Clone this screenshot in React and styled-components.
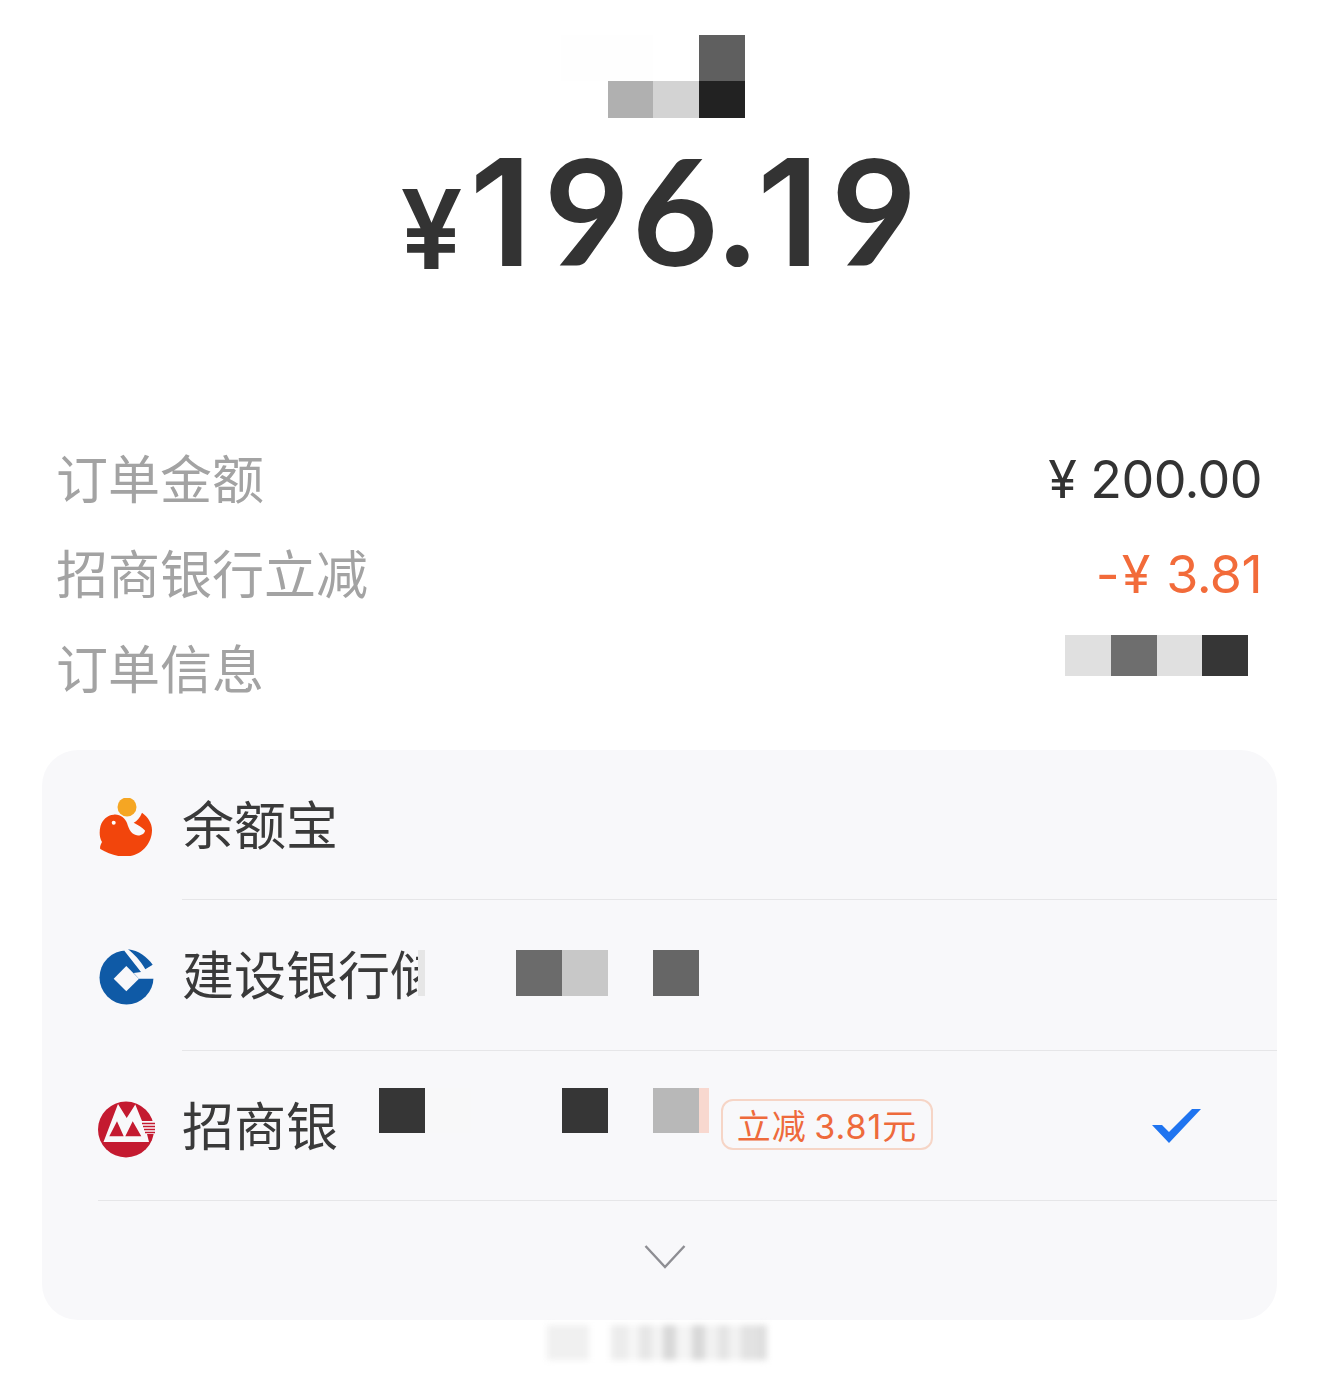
import React from 'react';
import styled, { createGlobalStyle } from 'styled-components';

const GlobalStyle = createGlobalStyle`
  html, body {
    margin: 0;
    padding: 0;
    background: #fff;
  }
  body {
    font-family: Inter, "Noto Sans CJK SC", sans-serif;
  }
`;

const Page = styled.div`
  width: 1320px;
  height: 1375px;
  overflow: hidden;
  display: flex;
  flex-direction: column;
`;

const Mosaic = styled.div`
  display: flex;
  flex-shrink: 0;
  margin-left: ${(p) => p.$left || 0}px;
  margin-right: ${(p) => p.$right || 0}px;
  margin-top: ${(p) => p.$top || 0}px;
  align-self: flex-start;
`;

const Cell = styled.div`
  width: ${(p) => p.$w || 46}px;
  height: ${(p) => p.$h || 46}px;
  background: ${(p) => p.$tone || 'transparent'};
`;

const Merchant = styled.div`
  display: flex;
  flex-direction: column;
  margin: 35px 0 0 561px;
`;

const MosaicRow = styled.div`
  display: flex;
`;

const Amount = styled.div`
  display: flex;
  align-items: baseline;
  justify-content: center;
  height: 186px;
  color: #333;
  font-family: Lato, Inter, sans-serif;
  font-weight: 700;
  line-height: 182px;
`;

const Currency = styled.span`
  font-family: Inter, sans-serif;
  font-weight: 600;
  font-size: 110px;
  margin-right: 7px;
  transform: translateY(3px);
`;

const Digits = styled.span`
  font-size: 148px;
  letter-spacing: 2px;
`;

const One = styled.span`
  font-family: Inter, sans-serif;
  font-weight: 600;
  letter-spacing: 12px;
`;

const Summary = styled.div`
  margin-top: 126px;
  padding: 0 58px 0 56px;
`;

const SummaryRow = styled.div`
  height: 95px;
  display: flex;
  align-items: center;
  justify-content: space-between;
`;

const Label = styled.span`
  font-family: "Noto Sans CJK SC", sans-serif;
  font-size: 52px;
  font-weight: 400;
  color: #a3a3a3;
  margin-bottom: 2px;
`;

const Value = styled.span`
  font-size: 52px;
  font-weight: 400;
  letter-spacing: -0.6px;
  margin-top: 4px;
  color: ${(p) => p.$tone || '#333'};
`;

const Sign = styled.span`
  letter-spacing: 2px;
`;

const Panel = styled.div`
  margin: 35px 43px 0 42px;
  height: 570px;
  background: #f8f8fa;
  border-radius: 36px;
  overflow: hidden;
`;

const PayRow = styled.div`
  height: ${(p) => p.$h}px;
  display: flex;
  align-items: center;
  padding: 0 76px 0 56px;
`;

const LogoSlot = styled.div`
  width: 58px;
  height: 58px;
  margin-right: 26px;
  margin-top: ${(p) => p.$shift || 0}px;
  flex-shrink: 0;
`;

const PayName = styled.div`
  font-family: "Noto Sans CJK SC", sans-serif;
  font-size: 52px;
  font-weight: 400;
  color: #3a3a3a;
  white-space: nowrap;
  overflow: hidden;
  flex-shrink: 0;
  margin-bottom: 5px;
  width: ${(p) => (p.$clip ? `${p.$clip}px` : 'auto')};
`;

const Divider = styled.div`
  height: 1px;
  margin-left: ${(p) => p.$inset}px;
  background: #e6e6e8;
`;

const Badge = styled.div`
  display: flex;
  align-items: center;
  justify-content: center;
  box-sizing: border-box;
  width: 212px;
  height: 51px;
  margin-left: 12px;
  margin-bottom: 2px;
  border: 2px solid #f6d5c6;
  border-radius: 12px;
  color: #ee6a3c;
  font-size: 34px;
  font-weight: 400;
  letter-spacing: 1px;
  word-spacing: -3px;
  white-space: pre;
  flex-shrink: 0;
`;

const Check = styled.svg`
  margin-left: auto;
  flex-shrink: 0;
`;

const MoreRow = styled.div`
  height: 119px;
  display: flex;
  justify-content: center;
  padding-top: 43px;
  padding-left: 11px;
  box-sizing: border-box;
`;

const HomeBar = styled.div`
  display: flex;
  align-items: stretch;
  height: 35px;
  width: 220px;
  margin: 5px 0 0 547px;
  filter: blur(3px);
`;

const BarStroke = styled.div`
  flex: ${(p) => p.$w};
  background: ${(p) => p.$tone};
`;

const YuebaoLogo = () => (
  <svg width="58" height="58" viewBox="6 6 58 58">
    <circle cx="35" cy="15" r="9.5" fill="#f5a623" />
    <path
      fill="#f2450c"
      d="M21.7 22.7C28 22 33 26 35 31C37 38 40 43 46 43.5C50 43.5 53 41 53 38.5C50 35 46 33 41.7 30.7C45 29 48 26 50 20.7C56 25 60 31 60 38C60 52 49 64 34 64.5C24 65 16 61 8.3 57C7.5 55 9 52 10 50C7.5 46 7 40 8.5 34C10.5 28 15 23 21.7 22.7Z"
    />
    <circle cx="21.7" cy="30.7" r="2" fill="#fff" />
  </svg>
);

const CcbLogo = () => (
  <svg width="58" height="58" viewBox="6 6 58 58">
    <circle cx="34.5" cy="35.5" r="27" fill="#0f5aa6" />
    <path fill="#f8f8fa" d="M31.7 5L32.7 9.3L49 30L41.7 31L47 36.7L67 36.7L67 5Z" />
    <path fill="#0f5aa6" d="M36 7.3C46.7 8.3 55 15 60.7 22.7L53.3 27.3C48.3 18.3 41.7 11.7 36 7.3Z" />
    <path fill="#f8f8fa" d="M34.3 24L47 36.7L34.3 49.3L21.7 36.7Z" />
  </svg>
);

const CmbLogo = () => (
  <svg width="58" height="58" viewBox="6 8 58 58">
    <circle cx="34" cy="36.5" r="28" fill="#c41a30" />
    <path fill="#f8f8fa" d="M11.5 49L26 11L34.7 25L43.3 11.5L50 28L62 28L62 41L55 41L57 49Z" />
    <path fill="#c41a30" d="M17.3 43.3L25 28.3L31.7 43.3ZM33.3 43.3L40.7 28.3L49.3 43.3Z" />
    <path stroke="#c41a30" strokeWidth="1.4" d="M50 30.5H63M51 33.5H63M52 36.5H63M53 39.5H63" />
  </svg>
);

const homeStrokes = [
  [38, '#f0f0f0'], [20, '#fff'], [15, '#ececec'], [10, '#f6f6f6'], [12, '#e6e6e6'], [10, '#f4f4f4'],
  [12, '#d8d8d8'], [14, '#f4f4f4'], [12, '#d8d8d8'], [12, '#f2f2f2'], [10, '#e4e4e4'], [10, '#f2f2f2'],
  [16, '#e2e2e2'], [8, '#dedede'],
];

export default function App() {
  return (
    <Page>
      <GlobalStyle />
      <Merchant>
        <MosaicRow>
          <Cell $w={92} $tone="#fefefe" />
          <Cell />
          <Cell $tone="#5f5f5f" />
        </MosaicRow>
        <MosaicRow>
          <Cell $w={47} $h={37} />
          <Cell $w={45} $h={37} $tone="#b0b0b0" />
          <Cell $h={37} $tone="#d3d3d3" />
          <Cell $h={37} $tone="#222" />
        </MosaicRow>
      </Merchant>
      <Amount>
        <Currency>¥</Currency>
        <Digits><One>1</One>96.<One>1</One>9</Digits>
      </Amount>
      <Summary>
        <SummaryRow>
          <Label>订单金额</Label>
          <Value>¥ 200.00</Value>
        </SummaryRow>
        <SummaryRow>
          <Label>招商银行立减</Label>
          <Value $tone="#f26b3a"><Sign>-¥</Sign> 3.81</Value>
        </SummaryRow>
        <SummaryRow>
          <Label>订单信息</Label>
          <Mosaic $top={15} $right={14}>
            <Cell $h={41} $tone="#e0e0e0" />
            <Cell $h={41} $tone="#6e6e6e" />
            <Cell $w={45} $h={41} $tone="#e0e0e0" />
            <Cell $h={41} $tone="#363636" />
          </Mosaic>
        </SummaryRow>
      </Summary>
      <Panel>
        <PayRow $h={149}>
          <LogoSlot $shift={5}><YuebaoLogo /></LogoSlot>
          <PayName>余额宝</PayName>
        </PayRow>
        <Divider $inset={140} />
        <PayRow $h={150}>
          <LogoSlot $shift={4}><CcbLogo /></LogoSlot>
          <PayName $clip={236}>建设银行储</PayName>
          <Mosaic $top={50}>
            <Cell $w={7} $tone="#e6e6e6" />
            <Cell $w={91} />
            <Cell $tone="#6b6b6b" />
            <Cell $tone="#c8c8c8" />
            <Cell $w={45} />
            <Cell $tone="#666" />
          </Mosaic>
        </PayRow>
        <Divider $inset={140} />
        <PayRow $h={149}>
          <LogoSlot $shift={9}><CmbLogo /></LogoSlot>
          <PayName>招商银</PayName>
          <Mosaic $left={41} $top={37}>
            <Cell $h={45} $tone="#363636" />
            <Cell $h={45} $tone="#f8f8f9" />
            <Cell $w={91} $h={45} />
            <Cell $h={45} $tone="#363636" />
            <Cell $w={45} $h={45} />
            <Cell $h={45} $tone="#b8b8b8" />
            <Cell $w={10} $h={45} $tone="#f8d8cf" />
          </Mosaic>
          <Badge>立减 3.81元</Badge>
          <Check width="49" height="36" viewBox="0 0 49 36">
            <path fill="#1f74f0" d="M0 17H10L17 24L40 1H49L17 35Z" />
          </Check>
        </PayRow>
        <Divider $inset={56} />
        <MoreRow>
          <svg width="42" height="26" viewBox="0 0 42 26">
            <path d="M1.5 2L21 23L40.5 2" fill="none" stroke="#8e8e93" strokeWidth="2.4" />
          </svg>
        </MoreRow>
      </Panel>
      <HomeBar>
        {homeStrokes.map(([w, tone], i) => (
          <BarStroke key={i} $w={w} $tone={tone} />
        ))}
      </HomeBar>
    </Page>
  );
}
